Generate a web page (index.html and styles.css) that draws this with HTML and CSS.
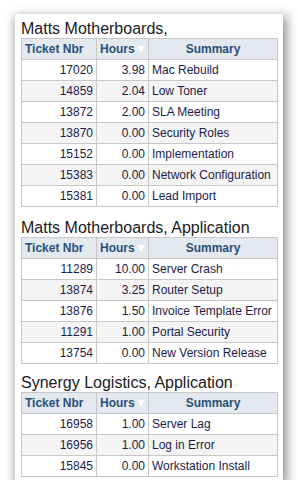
FILE: index.html
```html
<!DOCTYPE html>
<html>
<head>
<meta charset="utf-8">
<link rel="stylesheet" href="styles.css">
</head>
<body>
<div class="card">
  <section class="group">
    <h2 class="title">Matts Motherboards,</h2>
    <table class="grid">
      <colgroup><col class="c1"><col class="c2"><col class="c3"></colgroup>
      <thead><tr><th>Ticket Nbr</th><th class="hrs">Hours<span class="sort"></span></th><th class="sum">Summary</th></tr></thead>
      <tbody>
        <tr><td class="num">17020</td><td class="num">3.98</td><td>Mac Rebuild</td></tr>
        <tr><td class="num">14859</td><td class="num">2.04</td><td>Low Toner</td></tr>
        <tr><td class="num">13872</td><td class="num">2.00</td><td>SLA Meeting</td></tr>
        <tr><td class="num">13870</td><td class="num">0.00</td><td>Security Roles</td></tr>
        <tr><td class="num">15152</td><td class="num">0.00</td><td>Implementation</td></tr>
        <tr><td class="num">15383</td><td class="num">0.00</td><td>Network Configuration</td></tr>
        <tr><td class="num">15381</td><td class="num">0.00</td><td>Lead Import</td></tr>
      </tbody>
    </table>
  </section>
  <section class="group tight">
    <h2 class="title">Matts Motherboards, Application</h2>
    <table class="grid">
      <colgroup><col class="c1"><col class="c2"><col class="c3"></colgroup>
      <thead><tr><th>Ticket Nbr</th><th class="hrs">Hours<span class="sort"></span></th><th class="sum">Summary</th></tr></thead>
      <tbody>
        <tr><td class="num">11289</td><td class="num">10.00</td><td>Server Crash</td></tr>
        <tr><td class="num">13874</td><td class="num">3.25</td><td>Router Setup</td></tr>
        <tr><td class="num">13876</td><td class="num">1.50</td><td>Invoice Template Error</td></tr>
        <tr><td class="num">11291</td><td class="num">1.00</td><td>Portal Security</td></tr>
        <tr><td class="num">13754</td><td class="num">0.00</td><td>New Version Release</td></tr>
      </tbody>
    </table>
  </section>
  <section class="group">
    <h2 class="title">Synergy Logistics, Application</h2>
    <table class="grid">
      <colgroup><col class="c1"><col class="c2"><col class="c3"></colgroup>
      <thead><tr><th>Ticket Nbr</th><th class="hrs">Hours<span class="sort"></span></th><th class="sum">Summary</th></tr></thead>
      <tbody>
        <tr><td class="num">16958</td><td class="num">1.00</td><td>Server Lag</td></tr>
        <tr><td class="num">16956</td><td class="num">1.00</td><td>Log in Error</td></tr>
        <tr><td class="num">15845</td><td class="num">0.00</td><td>Workstation Install</td></tr>
      </tbody>
    </table>
  </section>
</div>
</body>
</html>
```
FILE: styles.css
```css
html, body {
  margin: 0;
  padding: 0;
  background: #ffffff;
}
body {
  font-family: Arial, "Liberation Sans", sans-serif;
  padding: 14px 0 0 15px;
}
.card {
  width: 268px;
  height: 466px;
  box-sizing: border-box;
  padding: 6px 7px 0 6px;
  background: #ffffff;
  box-shadow: 2px 4px 10px 2px rgba(0, 0, 0, 0.42);
}
.group {
  margin-bottom: 12px;
}
.group.tight {
  margin-bottom: 10px;
}
.title {
  margin: 0;
  font-size: 16px;
  font-weight: normal;
  line-height: 18px;
  height: 18px;
  color: #1a1a22;
  white-space: nowrap;
}
.grid {
  border-collapse: collapse;
  table-layout: fixed;
  width: 256px;
  font-size: 12px;
}
.c1 { width: 75px; }
.c2 { width: 52px; }
.c3 { width: 129px; }
.grid th, .grid td {
  border: 1px solid #c8c8c8;
  height: 21px;
  padding: 0 3px;
  box-sizing: border-box;
  line-height: 14px;
  white-space: nowrap;
  overflow: hidden;
}
.grid th {
  background: #e4e9f0;
  color: #28507a;
  font-weight: bold;
  text-align: left;
}
.grid th.sum {
  text-align: center;
}
.grid td {
  color: #1c1c4a;
  text-align: left;
}
.grid td.num {
  text-align: right;
}
.grid tbody tr:nth-child(even) td {
  background: #f4f4f4;
}
.sort {
  display: inline-block;
  width: 0;
  height: 0;
  margin-left: 2px;
  vertical-align: -1px;
  border-left: 4px solid transparent;
  border-right: 4px solid transparent;
  border-top: 8px solid #ffffff;
  filter: drop-shadow(0 0 0.6px #aab8c8);
}
```
